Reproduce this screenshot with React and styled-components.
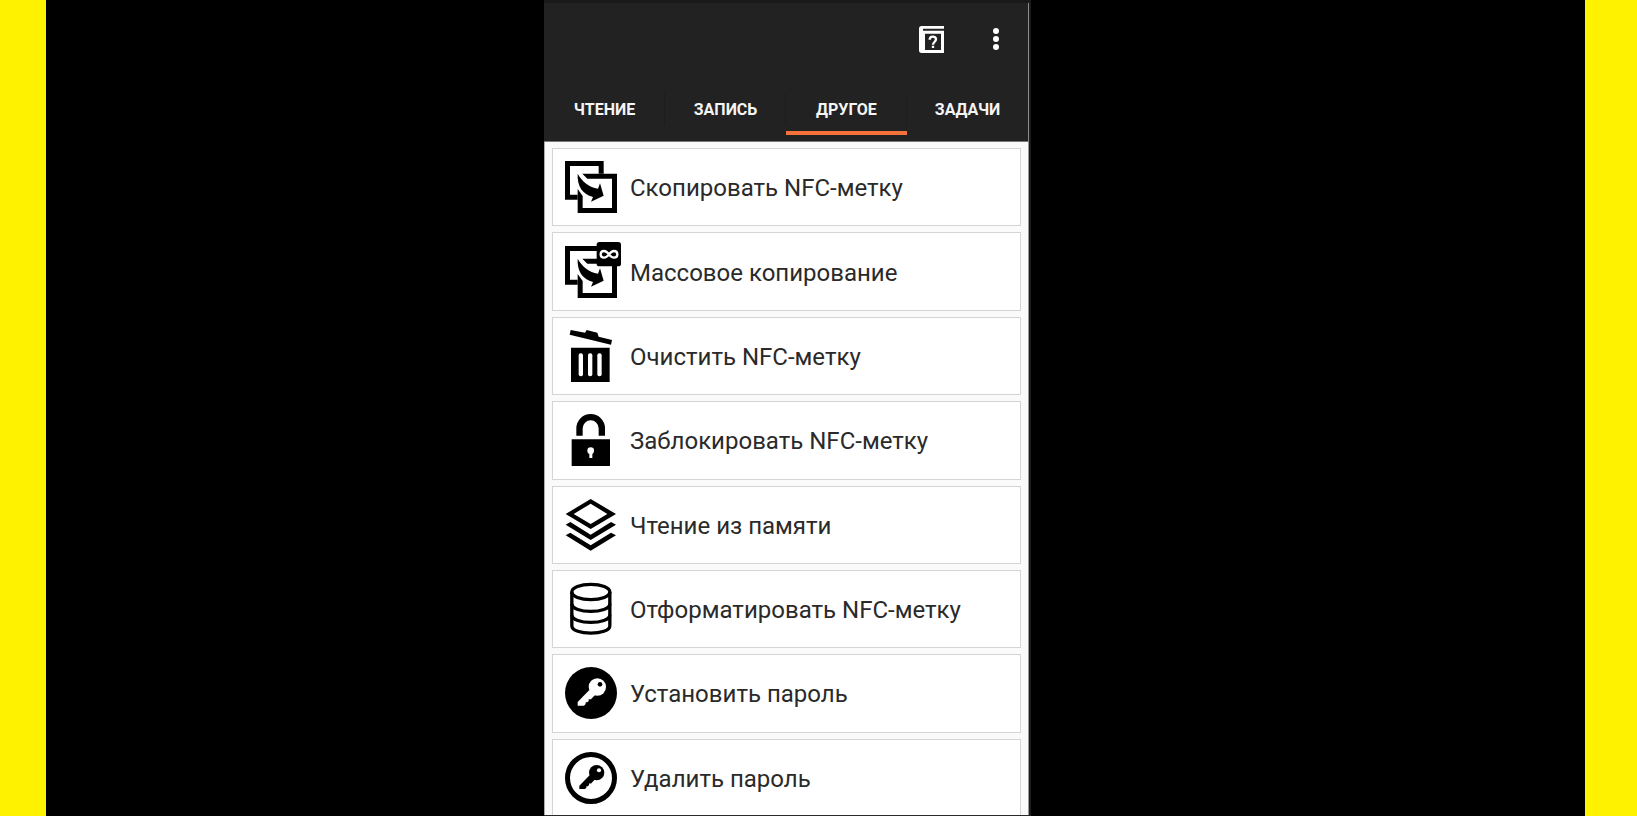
import React from 'react';
import styled, { createGlobalStyle } from 'styled-components';

const GlobalStyle = createGlobalStyle`
  * { box-sizing: border-box; }
  body { margin: 0; background: #000; font-family: Roboto, "Noto Sans", sans-serif; }
`;

const Stage = styled.div`
  display: grid;
  grid-template-columns: 498fr 487fr 554fr;
  min-height: 100vh;
  border-left: 46px solid #fff200;
  border-right: 52px solid #fff200;
  background: #000;
`;

const Phone = styled.main`
  grid-column: 2;
  display: flex;
  flex-direction: column;
  overflow: hidden;
  border-top: 3px solid #1a1a1a;
  border-right: 2px solid #1c1c1c;
  border-bottom: 1px solid #2a2a2a;
  background: #fafafa;
`;

const Header = styled.header`
  padding-bottom: 6px;
  border-right: 1px solid #8c8c8c;
  border-bottom: 1px solid #777;
  background: #222;
  color: #fff;
`;

const Toolbar = styled.div`
  display: flex;
  justify-content: flex-end;
  gap: 16px;
  height: 81px;
  padding: 12px 8px 0;
`;

const IconButton = styled.button`
  display: flex;
  align-items: center;
  justify-content: center;
  width: 48px;
  height: 48px;
  padding: 0;
  border: 0;
  background: none;
  color: #fff;
  cursor: pointer;
`;

const Tabs = styled.nav`
  display: grid;
  grid-template-columns: repeat(4, 1fr);
`;

const Tab = styled.button`
  height: 51px;
  padding: 5px 0 0;
  border: 0;
  border-bottom: 4px solid ${(p) => (p.$active ? '#f5733a' : 'transparent')};
  background: linear-gradient(#1d1d1d, #1d1d1d) right 9px / 1px 32px no-repeat;
  color: #f5f5f5;
  font: 700 16px/24px Roboto, "Noto Sans", sans-serif;
  text-transform: uppercase;
  cursor: pointer;

  &:last-child { background: none; }
`;

const List = styled.ul`
  flex: 1;
  display: grid;
  grid-auto-rows: 1fr;
  gap: 6px;
  margin: 0 0 -2px;
  padding: 6px 7px 0;
  border-left: 1px solid #aaa;
  border-right: 1px solid #999;
  list-style: none;
`;

const Item = styled.li`
  display: flex;
`;

const Card = styled.button`
  flex: 1;
  display: flex;
  align-items: center;
  gap: 13px;
  min-height: 72px;
  padding: 0 12px;
  border: 1px solid #d4d4d4;
  background: #fff;
  color: #2a2a2a;
  font: 400 24px/32px Roboto, "Noto Sans", sans-serif;
  text-align: left;
  cursor: pointer;
`;

const Label = styled.span`
  padding-top: 2px;
`;

const Glyph = styled.svg`
  flex: none;
  width: 52px;
  height: 52px;
  overflow: visible;
  fill: #000;
`;

const CopyShape = () => (
  <>
    <path d="M108.500 38V7.500H7.500V109H38" fill="none" stroke="#000" strokeWidth="15" />
    <path d="M52 38H156V156H38V84L53 105V141H141V53H67Z" />
    <path d="M38 38C52 62 72 79 99 83L105 67L116 104L78 122L84 108C53 100 36 76 38 38Z" />
  </>
);

const KeyShape = ({ color, hole }) => (
  <>
    <path fill={color} d="M73 69L38 105V116H57L62 111V106H67L71 102V97H78L90 84Z" />
    <circle cx="97" cy="60" r="26" fill={color} />
    <circle cx="105" cy="52" r="7" fill={hole} />
  </>
);

const icons = {
  copy: <CopyShape />,
  bulk: (
    <>
      <CopyShape />
      <rect x="95" y="-12" width="73" height="73" rx="8" />
      <path
        d="M132 25C126 17 122 15 117 15C111 15 107 19 107 25S111 35 117 35C122 35 126 33 132 25S142 15 147 15C153 15 157 19 157 25S153 35 147 35C142 35 138 33 132 25Z"
        fill="none" stroke="#fff" strokeWidth="7"
      />
    </>
  ),
  trash: (
    <>
      <path d="M17 0L60 8L65 0L97 8L101 20L141 30L138 44L14 14Z" />
      <path d="M18 53H134V156H18Z" />
      <g fill="#fff">
        <rect x="41" y="70" width="13" height="69" rx="6" />
        <rect x="69" y="70" width="13" height="69" rx="6" />
        <rect x="97" y="70" width="13" height="69" rx="6" />
      </g>
    </>
  ),
  lock: (
    <>
      <path d="M43.500 65V43A33.500 33.500 0 0 1 110.500 43V65" fill="none" stroke="#000" strokeWidth="19" />
      <path d="M20 76H135V156H20Z" />
      <circle cx="77" cy="110" r="10" fill="#fff" />
      <path d="M73 112H82V132H73Z" fill="#fff" />
    </>
  ),
  layers: (
    <>
      <path fillRule="evenodd" d="M77 0L153 45L77 90L2 45ZM77 14L26 45L77 75L127 45Z" />
      <path d="M2 77L16 69L77 107L138 69L153 77L77 123Z" />
      <path d="M2 109L16 101L77 139L138 101L153 109L77 155Z" />
    </>
  ),
  database: (
    <g fill="none" stroke="#000" strokeWidth="10">
      <ellipse cx="77.500" cy="27" rx="57" ry="23" />
      <path d="M20.500 27V128C20.500 158 134.500 158 134.500 128V27" />
      <path d="M20.500 62C20.500 93 134.500 93 134.500 62" />
      <path d="M20.500 95C20.500 126 134.500 126 134.500 95" />
    </g>
  ),
  setKey: (
    <>
      <circle cx="78" cy="78" r="78" />
      <KeyShape color="#fff" hole="#000" />
    </>
  ),
  removeKey: (
    <>
      <circle cx="78" cy="78" r="70.500" fill="#fff" stroke="#000" strokeWidth="15" />
      <g transform="translate(9.600 9.200) scale(.88)">
        <KeyShape color="#000" hole="#fff" />
      </g>
    </>
  ),
};

const tabs = ['Чтение', 'Запись', 'Другое', 'Задачи'];

const actions = [
  ['copy', 'Скопировать NFC-метку'],
  ['bulk', 'Массовое копирование'],
  ['trash', 'Очистить NFC-метку'],
  ['lock', 'Заблокировать NFC-метку'],
  ['layers', 'Чтение из памяти'],
  ['database', 'Отформатировать NFC-метку'],
  ['setKey', 'Установить пароль'],
  ['removeKey', 'Удалить пароль'],
];

export default function App() {
  const [active, setActive] = React.useState('Другое');
  return (
    <>
      <GlobalStyle />
      <Stage>
        <Phone>
          <Header>
            <Toolbar>
              <IconButton aria-label="Справка">
                <svg width="26" height="27" viewBox="0 0 78 81" fill="none" stroke="#fff">
                  <path fill="#fff" stroke="none" fillRule="evenodd" d="M8 0H75V8H12V14H75V81H8Q0 81 0 73V8Q0 0 8 0ZM18 23V72H66V23Z" />
                  <path strokeWidth="7" d="M32 41C32 29 51 29 51 40C51 48 42 48 42 56M42 59V66" />
                </svg>
              </IconButton>
              <IconButton aria-label="Меню">
                <svg width="6" height="24" viewBox="0 0 6 24" fill="#fff">
                  <circle cx="3" cy="4" r="3" />
                  <circle cx="3" cy="12" r="3" />
                  <circle cx="3" cy="20" r="3" />
                </svg>
              </IconButton>
            </Toolbar>
            <Tabs>
              {tabs.map((name) => (
                <Tab key={name} $active={name === active} onClick={() => setActive(name)}>
                  {name}
                </Tab>
              ))}
            </Tabs>
          </Header>
          <List>
            {actions.map(([icon, label]) => (
              <Item key={icon}>
                <Card>
                  <Glyph viewBox="0 0 156 156" aria-hidden="true">{icons[icon]}</Glyph>
                  <Label>{label}</Label>
                </Card>
              </Item>
            ))}
          </List>
        </Phone>
      </Stage>
    </>
  );
}
